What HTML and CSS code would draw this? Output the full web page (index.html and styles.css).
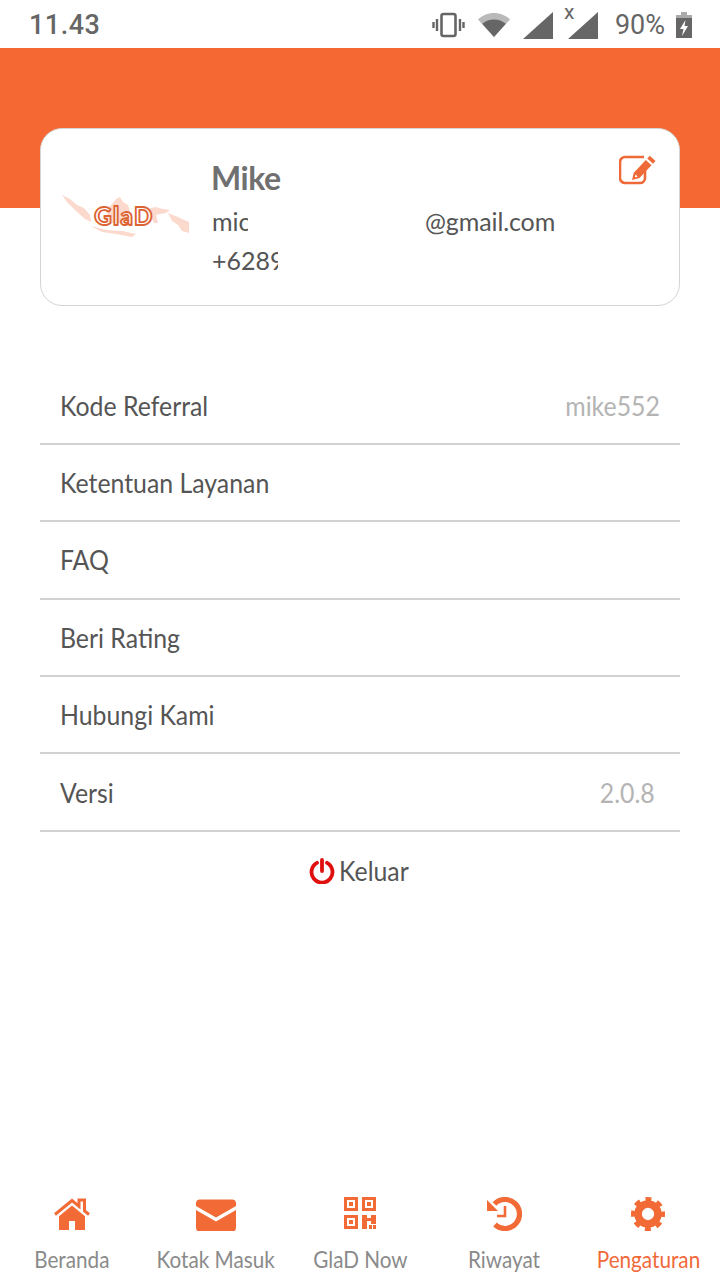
FILE: index.html
```html
<!DOCTYPE html>
<html lang="id">
<head>
<meta charset="utf-8">
<title>Pengaturan</title>
<link rel="stylesheet" href="styles.css">
</head>
<body>
<div class="screen">
  <header class="status">
    <span class="clock">11.43</span>
    <div class="status-icons">
      <svg class="ic-vibrate" width="34" height="26" viewBox="0 0 34 26"><rect x="9.500" y="2" width="14" height="22" rx="2" fill="none" stroke="#666" stroke-width="2.600"/><path d="M5 7v12M1.500 10v6M28 7v12M31.500 10v6" stroke="#666" stroke-width="2.400"/></svg>
      <svg class="ic-wifi" width="32" height="26" viewBox="0 0 32 26"><path d="M0 7.500C4 3.500 10 1 16 1s12 2.500 16 6.500L16 25z" fill="#b9b9b9"/><path d="M4.200 11.800C7.500 9 11.500 7.500 16 7.500s8.500 1.500 11.800 4.300L16 25z" fill="#666"/></svg>
      <svg class="ic-signal" width="30" height="27" viewBox="0 0 30 27" preserveAspectRatio="none"><path d="M30 0v27H0z" fill="#666"/></svg>
      <span class="signal-x">
        <span class="x-mark">x</span>
        <svg width="30" height="27" viewBox="0 0 30 27" preserveAspectRatio="none"><path d="M30 0v27H0z" fill="#666"/></svg>
      </span>
      <span class="battery-pct">90%</span>
      <svg class="ic-battery" width="16" height="26" viewBox="0 0 16 26"><rect x="5" y="0" width="6" height="3" fill="#aaa"/><rect x="0" y="3" width="16" height="4" fill="#aaa"/><rect x="0" y="6" width="16" height="20" fill="#666"/><path d="M9.500 8 4 17h3.500L6 24l6-10H8.500z" fill="#fff"/></svg>
    </div>
  </header>

  <div class="banner"></div>

  <section class="profile-card">
    <svg class="logo" width="130" height="46" viewBox="0 0 130 46">
      <g fill="#fcd9cd">
        <path d="M2 2 10 6 17 12 24 15 30 22 31 29 25 26 15 17 7 9z"/>
        <path d="M31 33 46 37 62 38 76 41 72 44 56 41 42 39z"/>
        <path d="M46 17 52 11 56 6 60 4 63 9 68 12 70 18 64 30 50 30z"/>
        <path d="M88 16 95 14 103 16 110 17 106 20 100 21 96 22 98 30 94 30 90 22z"/>
        <path d="M108 20 118 24 124 27 129 29 129 40 122 38 118 32 112 28z"/>
      </g>
      <text class="logo-text" x="64" y="32" text-anchor="middle">GlaD</text>
    </svg>
    <div class="identity">
      <h1 class="name">Mike</h1>
      <div class="email"><span class="email-start">mic</span><span class="email-end">@gmail.com</span></div>
      <div class="phone">+6289</div>
    </div>
    <svg class="edit" width="38" height="30" viewBox="0 0 38 30">
      <path d="M26 14.500V23a5 5 0 0 1-5 5H6a5 5 0 0 1-5-5V7a5 5 0 0 1 5-5h19" fill="none" stroke="#ef6a38" stroke-width="2.600"/>
      <path d="M30.800 0.800 36.500 6 34 8.700 28.300 3.400zM26.800 5 32.500 10.300 20.500 23 13 25 14.800 17.700z" fill="#ef6a38"/>
      <path d="M16.500 19.500 18.700 21.600 15.800 22.400z" fill="#fff"/>
    </svg>
  </section>

  <ul class="menu">
    <li class="menu-row"><span class="narrow">Kode Referral</span><span class="narrow-end menu-value">mike552</span></li>
    <li class="menu-row"><span class="narrow">Ketentuan Layanan</span></li>
    <li class="menu-row"><span class="narrow">FAQ</span></li>
    <li class="menu-row"><span class="narrow">Beri Rating</span></li>
    <li class="menu-row"><span class="narrow">Hubungi Kami</span></li>
    <li class="menu-row"><span class="narrow">Versi</span><span class="narrow-end menu-value version">2.0.8</span></li>
  </ul>

  <div class="logout">
    <svg width="26" height="26" viewBox="0 0 26 26"><path d="M8 4.800a10.500 10.500 0 1 0 10 0" fill="none" stroke="#e0100f" stroke-width="3.800" stroke-linecap="round"/><path d="M13 2v11" stroke="#e0100f" stroke-width="3.800" stroke-linecap="round"/></svg>
    <span class="narrow">Keluar</span>
  </div>

  <nav class="tabbar">
    <div class="tab">
      <svg class="tab-icon" width="36" height="34" viewBox="0 0 36 34"><path d="M1 17.500 18 3.500l7 5.800V3h5.500v10.800l4.500 3.700" fill="none" stroke="#f26a35" stroke-width="3"/><path d="M18 8.500 5 19.300V33h10v-9h6v9h10V19.300z" fill="#f26a35"/></svg>
      <span class="tab-label">Beranda</span>
    </div>
    <div class="tab">
      <svg class="tab-icon" width="42" height="34" viewBox="0 0 42 34"><path d="M5 2.500h32a4 4 0 0 1 4 4V9L21 20.500 1 9V6.500a4 4 0 0 1 4-4z" fill="#f26a35"/><path d="M1 13 21 24.500 41 13v17.500a4 4 0 0 1-4 4H5a4 4 0 0 1-4-4z" fill="#f26a35"/></svg>
      <span class="tab-label">Kotak Masuk</span>
    </div>
    <div class="tab">
      <svg class="tab-icon" width="32" height="34" viewBox="0 0 32 34" fill="#f26a35"><path fill-rule="evenodd" d="M0 0h14v14H0zM3 3v8h8V3zM18 0h14v14H18zM21 3v8h8V3zM0 18h14v14H0zM3 21v8h8v-8z"/><path d="M5 5h4v4H5zM23 5h4v4h-4zM5 23h4v4H5zM18 18h5v3h4v-3h5v9h-5v-3h-4v8h-5zM25 28h3v4h-3zM29 28h3v4h-3z"/></svg>
      <span class="tab-label">GlaD Now</span>
    </div>
    <div class="tab">
      <svg class="tab-icon" width="36" height="34" viewBox="0 0 36 34"><path d="M8.500 7A14.500 14.500 0 1 1 9 27.500" fill="none" stroke="#f26a35" stroke-width="5.200"/><path d="M1 3v11h11z" fill="#f26a35"/><path d="M19 9v10h-8" fill="none" stroke="#f26a35" stroke-width="2.600"/></svg>
      <span class="tab-label">Riwayat</span>
    </div>
    <div class="tab tab-active">
      <svg class="tab-icon" width="36" height="34" viewBox="0 0 36 36"><circle cx="18" cy="18" r="10.500" fill="none" stroke="#f26a35" stroke-width="8"/><circle cx="18" cy="18" r="15.500" fill="none" stroke="#f26a35" stroke-width="5" stroke-dasharray="6.200 5.970" stroke-dashoffset="3.100"/></svg>
      <span class="tab-label">Pengaturan</span>
    </div>
  </nav>
</div>
</body>
</html>
```

FILE: styles.css
```css
* { box-sizing: border-box; }

html, body { margin: 0; padding: 0; background: #fff; }

.screen {
  width: 720px;
  height: 1280px;
  display: flex;
  flex-direction: column;
  overflow: hidden;
  font-family: "Lato", "Open Sans", sans-serif;
  color: #555;
}

/* Status bar */
.status {
  height: 48px;
  flex: none;
  display: flex;
  align-items: center;
  justify-content: space-between;
  padding: 2px 28px 0 29px;
  font-family: "Roboto", sans-serif;
  color: #666;
}
.clock { font-size: 27px; font-weight: 500; letter-spacing: 0.5px; }
.status-icons { display: flex; align-items: center; }
.ic-wifi { margin-left: 12px; }
.ic-signal { margin-left: 13px; }
.signal-x { position: relative; display: flex; margin-left: 15px; }
.x-mark { position: absolute; left: -4px; top: -11px; font-size: 21px; line-height: 22px; }
.battery-pct { margin-left: 17px; font-size: 27px; }
.ic-battery { margin-left: 11px; }

/* Orange banner behind the profile card */
.banner { height: 160px; flex: none; background: #f56733; }

/* Profile card */
.profile-card {
  position: relative;
  flex: none;
  height: 178px;
  margin: -80px 40px 0;
  padding: 26px 0 0 19px;
  display: flex;
  background: #fff;
  border: 1px solid #d4d4d4;
  border-radius: 22px;
}
.logo { flex: none; margin-top: 38px; overflow: visible; }
.logo-text {
  font-family: "Lato", sans-serif;
  font-size: 24px;
  font-weight: 900;
  fill: #fff;
  stroke: #dc6333;
  stroke-width: 1.800;
  stroke-linejoin: round;
  letter-spacing: 1.500px;
}
.identity { margin-left: 22px; }
.name { margin: 0 0 0 -1px; height: 46px; font-size: 32px; line-height: 46px; font-weight: 700; color: #707070; letter-spacing: -0.5px; }
.email, .phone { font-size: 25px; color: #555; height: 38px; line-height: 38px; }
.email { display: flex; padding-top: 1px; }
.email-start { width: 36px; overflow: hidden; }
.email-end { margin-left: 177px; letter-spacing: -0.1px; }
.phone { width: 66px; overflow: hidden; padding-top: 2px; }
.edit { position: absolute; top: 26px; right: 22px; }

/* Settings list */
.menu {
  list-style: none;
  margin: 61.500px 40px 0;
  padding: 0;
}
.menu-row {
  height: 77.400px;
  padding: 0 20px;
  display: flex;
  align-items: center;
  justify-content: space-between;
  border-bottom: 2px solid #d2d2d2;
  font-size: 27px;
}
/* The list text runs narrower than the family's normal width */
.narrow, .narrow-end { display: inline-block; transform: scaleX(0.92); transform-origin: left center; }
.narrow-end { transform-origin: right center; }
.menu-value { color: #b4b4b4; }
.version { margin-right: 5px; }

.logout {
  margin-top: 19px;
  display: flex;
  align-items: center;
  justify-content: center;
  gap: 4px;
  font-size: 27px;
  height: 40px;
  padding-left: 3px;
}

/* Bottom tabs */
.tabbar {
  margin-top: auto;
  height: 94px;
  padding-top: 11px;
  flex: none;
  display: grid;
  grid-template-columns: repeat(5, 144px);
}
.tab {
  display: flex;
  flex-direction: column;
  align-items: center;
  color: #8a8a8a;
  font-size: 23px;
}
.tab-icon { height: 34px; flex: none; }
.tab-label { margin-top: 12px; line-height: 32px; white-space: nowrap; transform: scaleX(0.9); }
.tab-active { color: #f0693a; }
```
